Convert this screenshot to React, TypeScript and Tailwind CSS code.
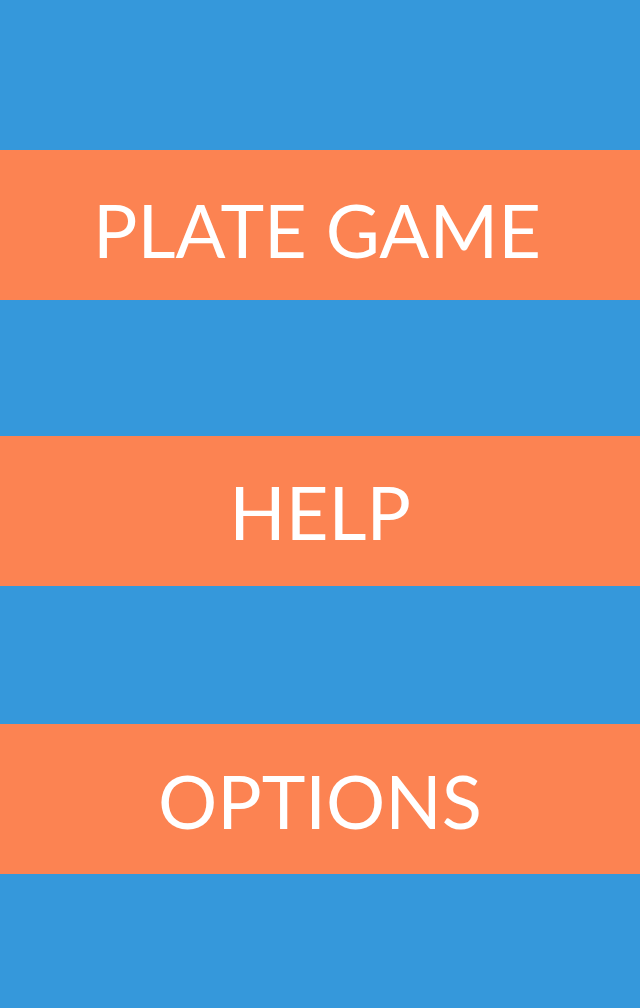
export default function App() {
  const font = { fontFamily: "Lato, 'Open Sans', sans-serif" };
  return (
    <div className="w-[640px] h-[1008px] bg-[#3598db] flex flex-col overflow-hidden" style={font}>
      <div className="h-[150px] shrink-0" />
      <div className="h-[150px] shrink-0 bg-[#fc8352] flex items-center justify-center text-white text-[74px] leading-none pt-[10px] pr-[6px]">
        PLATE GAME
      </div>
      <div className="h-[136px] shrink-0" />
      <div className="h-[150px] shrink-0 bg-[#fc8352] flex items-center justify-center text-white text-[74px] leading-none pt-[2px]">
        HELP
      </div>
      <div className="h-[138px] shrink-0" />
      <div className="h-[150px] shrink-0 bg-[#fc8352] flex items-center justify-center text-white text-[74px] leading-none pt-[4px]">
        OPTIONS
      </div>
      <div className="flex-1" />
    </div>
  );
}
